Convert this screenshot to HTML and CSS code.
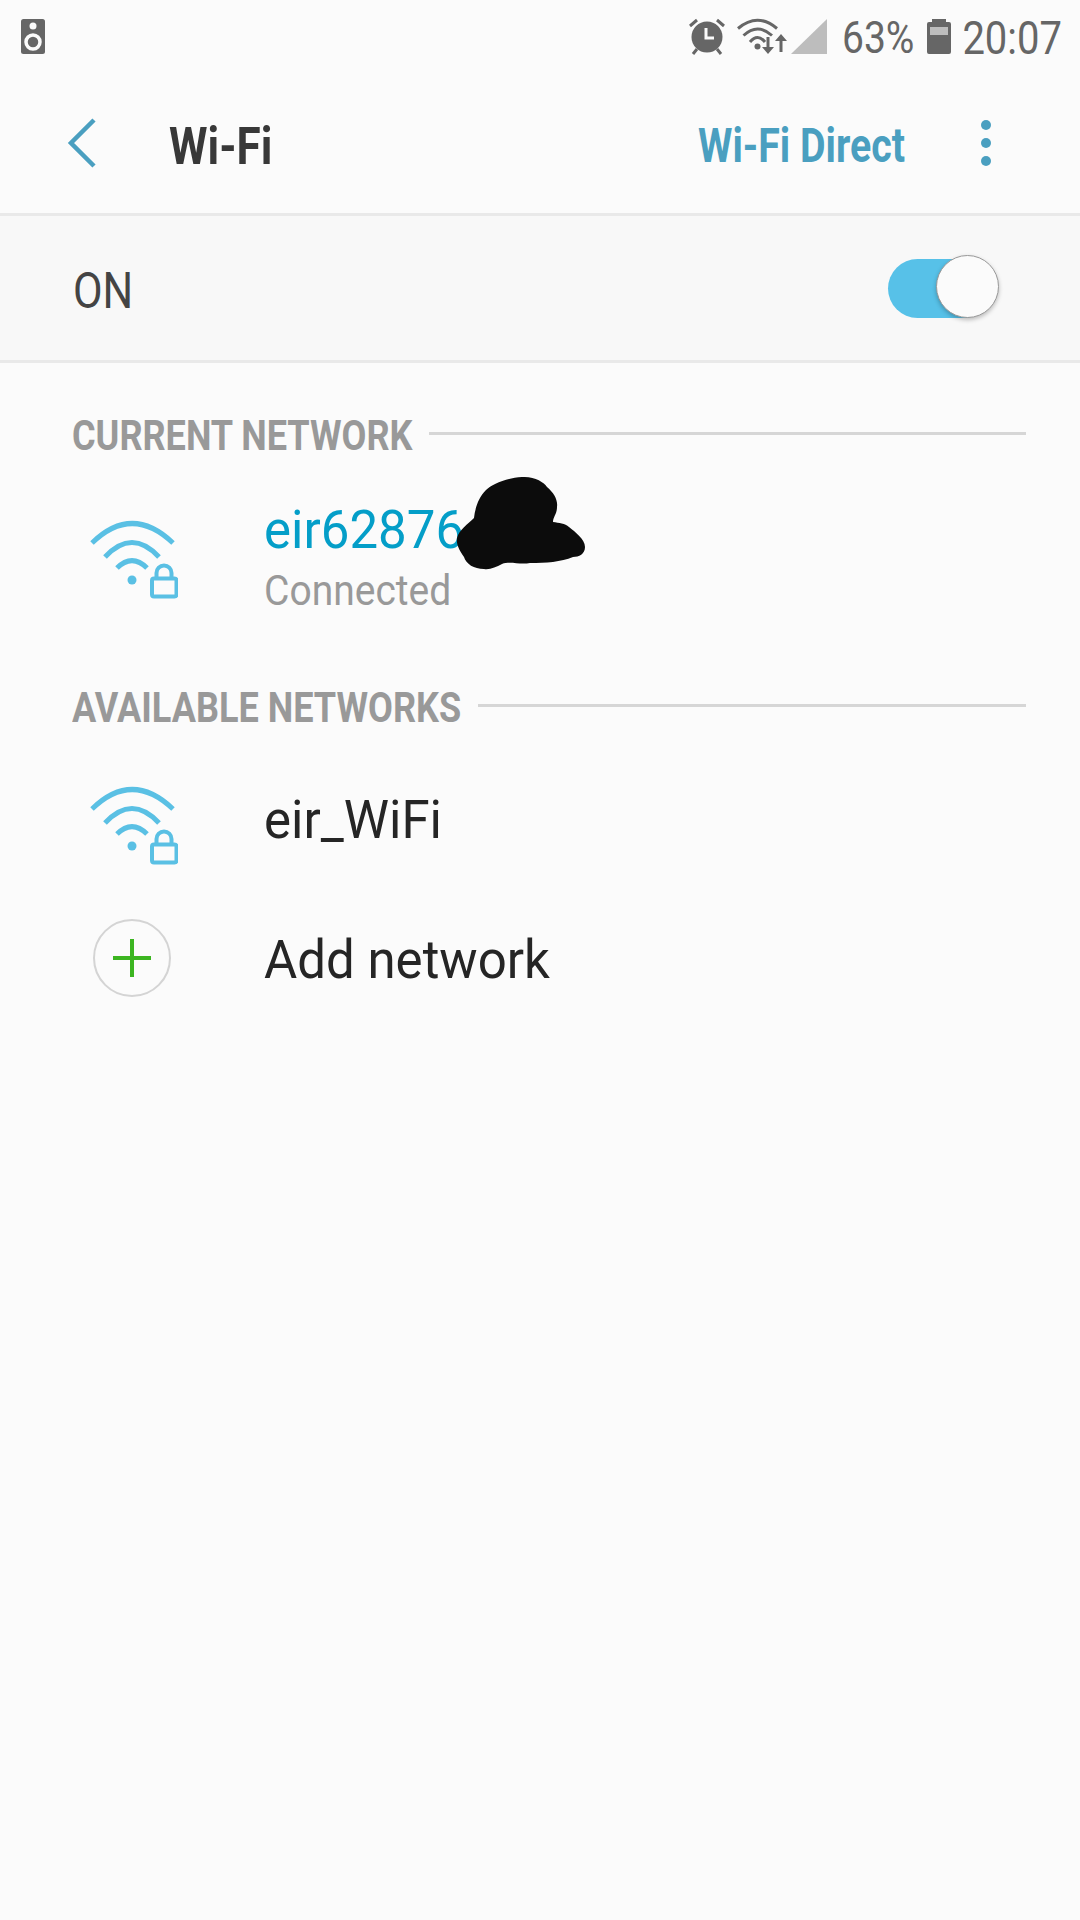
FILE: index.html

```html
<!DOCTYPE html>
<html>
	<head>
		<meta charset="utf-8"/>
		<title>Wi-Fi</title>
		<link rel="stylesheet" href="styles.css">
	</head>
	<body>
		<main class="page">
			<div class="status-bar">
				<svg class="ico-speaker" width="24" height="35" viewBox="0 0 24 35">
					<rect width="24" height="35" rx="2.5" fill="#666"/>
					<circle cx="12" cy="7" r="3.5" fill="#fbfbfb"/>
					<circle cx="12" cy="23" r="7" fill="none" stroke="#fbfbfb" stroke-width="3.5"/>
				</svg>
				<div class="status-right">
					<svg width="38" height="38" viewBox="0 0 38 38">
						<circle cx="19" cy="20" r="15.5" fill="#666"/>
						<path d="M18 11v10h8" fill="none" stroke="#fbfbfb" stroke-width="3"/>
						<path d="M2 9l7-6M36 9l-7-6M9 32l-4 5M29 32l4 5" fill="none" stroke="#666" stroke-width="3"/>
					</svg>
					<svg class="ico-wifi-small" width="50" height="37" viewBox="0 0 50 37">
						<g fill="none" stroke="#666" stroke-width="3">
							<path d="M1 10.500Q20.500 -6 40 10.500"/>
							<path d="M6.500 17.500Q20.500 4.500 35 17.500"/>
							<path d="M13 24Q20.500 15 28 24"/>
							<path d="M31 19v13M44 34v-14"/>
						</g>
						<circle cx="20.500" cy="28.500" r="3" fill="#666"/>
						<path d="M25 29h12l-6 7zM38 23l6-7 6 7z" fill="#666"/>
					</svg>
					<svg class="ico-signal" width="36" height="35" viewBox="0 0 36 35">
						<path d="M0 35L36 0V35Z" fill="#bdbdbd"/>
					</svg>
					<span class="status-text pct">63%</span>
					<svg class="ico-battery" width="24" height="35" viewBox="0 0 24 35">
						<path d="M5 0h14v3h3a2 2 0 0 1 2 2v28a2 2 0 0 1-2 2H2a2 2 0 0 1-2-2V5a2 2 0 0 1 2-2h3z" fill="#666"/>
						<rect x="3" y="8" width="18" height="8" fill="#bdbdbd"/>
					</svg>
					<span class="status-text clock">20:07</span>
				</div>
			</div>

			<header class="toolbar">
				<svg class="ico-back" width="30" height="50" viewBox="0 0 30 50">
					<path d="M27 2L4 25l23 23" fill="none" stroke="#4a9fc0" stroke-width="4.500"/>
				</svg>
				<h1 class="title">Wi-Fi</h1>
				<a class="direct">Wi-Fi Direct</a>
				<svg class="ico-more" width="12" height="48" viewBox="0 0 12 48">
					<circle cx="6" cy="6" r="5" fill="#4a9fc0"/>
					<circle cx="6" cy="24" r="5" fill="#4a9fc0"/>
					<circle cx="6" cy="42" r="5" fill="#4a9fc0"/>
				</svg>
			</header>

			<div class="switch-row">
				<span class="on-label">ON</span>
				<div class="toggle"><div class="thumb"></div></div>
			</div>

			<section class="section first">
				<div class="section-head">
					<h2>CURRENT NETWORK</h2>
					<div class="rule"></div>
				</div>
				<div class="net current">
					<svg class="net-icon" width="92" height="80" viewBox="0 0 92 80">
						<use href="#wifi-lock"/>
					</svg>
					<div class="net-text">
						<div class="net-name active">eir62876</div>
						<div class="net-sub">Connected</div>
					</div>
				</div>
			</section>

			<section class="section">
				<div class="section-head">
					<h2>AVAILABLE NETWORKS</h2>
					<div class="rule"></div>
				</div>
				<div class="net">
					<svg class="net-icon low" width="92" height="80" viewBox="0 0 92 80">
						<use href="#wifi-lock"/>
					</svg>
					<div class="net-name">eir_WiFi</div>
				</div>
				<div class="net">
					<div class="add-icon">
						<svg width="38" height="38" viewBox="0 0 38 38">
							<path d="M19 0v38M0 19h38" stroke="#3cb521" stroke-width="4"/>
						</svg>
					</div>
					<div class="net-name add">Add network</div>
				</div>
			</section>

			<!-- scribble over the network name -->
			<svg class="scribble" width="132" height="96" viewBox="0 0 132 96">
				<path d="M66 1C78 0 88 6 91 11C98 17 102 24 101 31C101 38 97 41 97 46C103 47 109 47 113 51C119 56 129 63 129 71C129 78 123 81 117 81C105 86 90 87 74 87C64 89 54 85 46 88C40 91 34 94 28 93C18 93 10 88 8 81C4 75 0 69 1 62C3 54 12 48 18 42C19 33 22 22 30 14C36 8 50 2 66 1Z" fill="#0c0c0c"/>
			</svg>

			<svg class="defs" width="0" height="0">
				<defs>
					<g id="wifi-lock">
						<g fill="none" stroke="#5ac0e4" stroke-width="5">
							<path d="M6 24Q46 -15 87 24"/>
							<path d="M19 38Q46 9 73 38"/>
							<path d="M31 49Q46 34 61 49"/>
						</g>
						<circle cx="46" cy="61" r="4.500" fill="#5ac0e4"/>
						<rect x="66" y="59.500" width="24.500" height="18" rx="2" fill="none" stroke="#5ac0e4" stroke-width="4"/>
						<path d="M70.500 58v-4a7.500 7.500 0 0 1 15 0v4" fill="none" stroke="#5ac0e4" stroke-width="4"/>
					</g>
				</defs>
			</svg>
		</main>
	</body>
</html>
```

FILE: styles.css

```css
* {
	box-sizing: border-box;
}

body {
	margin: 0;
	background: #fbfbfb;
	font-family: Roboto, sans-serif;
}

.page {
	position: relative;
	width: 1080px;
	height: 1920px;
	overflow: hidden;
}

.status-bar {
	height: 72px;
	display: flex;
	align-items: center;
	justify-content: space-between;
	padding: 0 18px 0 21px;
}

.status-right {
	display: flex;
	align-items: center;
}

.ico-wifi-small {
	margin-left: 11px;
}

.ico-signal {
	margin-left: 4px;
}

.ico-battery {
	margin-left: 13px;
}

.status-text {
	display: inline-block;
	padding-top: 4px;
	font-size: 39px;
	color: #666;
	transform: scaleY(1.14);
}

.pct {
	margin-left: 15px;
}

.clock {
	margin-left: 11px;
	font-size: 40px;
}

.toolbar {
	height: 141px;
	display: flex;
	align-items: center;
	padding: 6px 88px 0 67px;
}

.ico-back,
.ico-more {
	margin-top: -6px;
}

.title {
	margin: 0 0 0 72px;
	font-size: 44px;
	font-weight: 700;
	color: #383838;
	transform: scaleY(1.19);
}

.direct {
	margin-left: auto;
	font-size: 39.300px;
	font-weight: 700;
	color: #4a9fc0;
	transform: scaleY(1.21);
}

.ico-more {
	margin-left: 75px;
}

.switch-row {
	height: 150px;
	display: flex;
	align-items: center;
	justify-content: space-between;
	padding: 4px 87px 0 73px;
	background: #f8f8f8;
	border-top: 3px solid #e9e9e9;
	border-bottom: 3px solid #e9e9e9;
}

.on-label {
	font-size: 43px;
	color: #444;
	transform: scaleY(1.18);
}

.toggle {
	position: relative;
	width: 105px;
	height: 59px;
	margin-top: -4px;
	border-radius: 30px;
	background: #57c1e8;
}

.thumb {
	position: absolute;
	right: -6px;
	top: -4px;
	width: 63px;
	height: 63px;
	border-radius: 50%;
	background: #fbfbfb;
	border: 1px solid #999;
	box-shadow: 0 2px 4px rgba(0, 0, 0, 0.25);
}

.section {
	margin-top: 20px;
}

.section.first {
	margin-top: 24px;
}

.section-head {
	height: 92px;
	display: flex;
	align-items: center;
	gap: 17px;
	padding: 0 54px 0 72px;
}

.section-head h2 {
	margin: 5px 0 0;
	font-size: 36.100px;
	font-weight: 700;
	color: #999;
	white-space: nowrap;
	transform: scaleY(1.17);
}

.rule {
	flex: 1;
	height: 3px;
	background: #d6d6d6;
}

.net {
	height: 138px;
	display: flex;
	align-items: center;
	gap: 86px;
	padding-left: 86px;
}

.net.current {
	height: 160px;
}

.net-icon {
	flex: none;
}

.net-icon.low {
	margin-top: 10px;
}

.net-name {
	font-size: 51px;
	line-height: 56px;
	color: #252525;
	transform: scaleY(1.04);
	transform-origin: left center;
}

.net-name.add {
	margin-top: 3px;
}

.net-name.active {
	margin-top: -2px;
	color: #049ec8;
}

.net-sub {
	margin-top: 10px;
	font-size: 39px;
	color: #999;
	transform: scaleY(1.08);
}

.add-icon {
	flex: none;
	width: 78px;
	height: 78px;
	margin: 0 7px;
	display: flex;
	align-items: center;
	justify-content: center;
	border: 2px solid #d4d4d4;
	border-radius: 50%;
}

.scribble {
	position: absolute;
	left: 456px;
	top: 476px;
}

.defs {
	position: absolute;
}
```
